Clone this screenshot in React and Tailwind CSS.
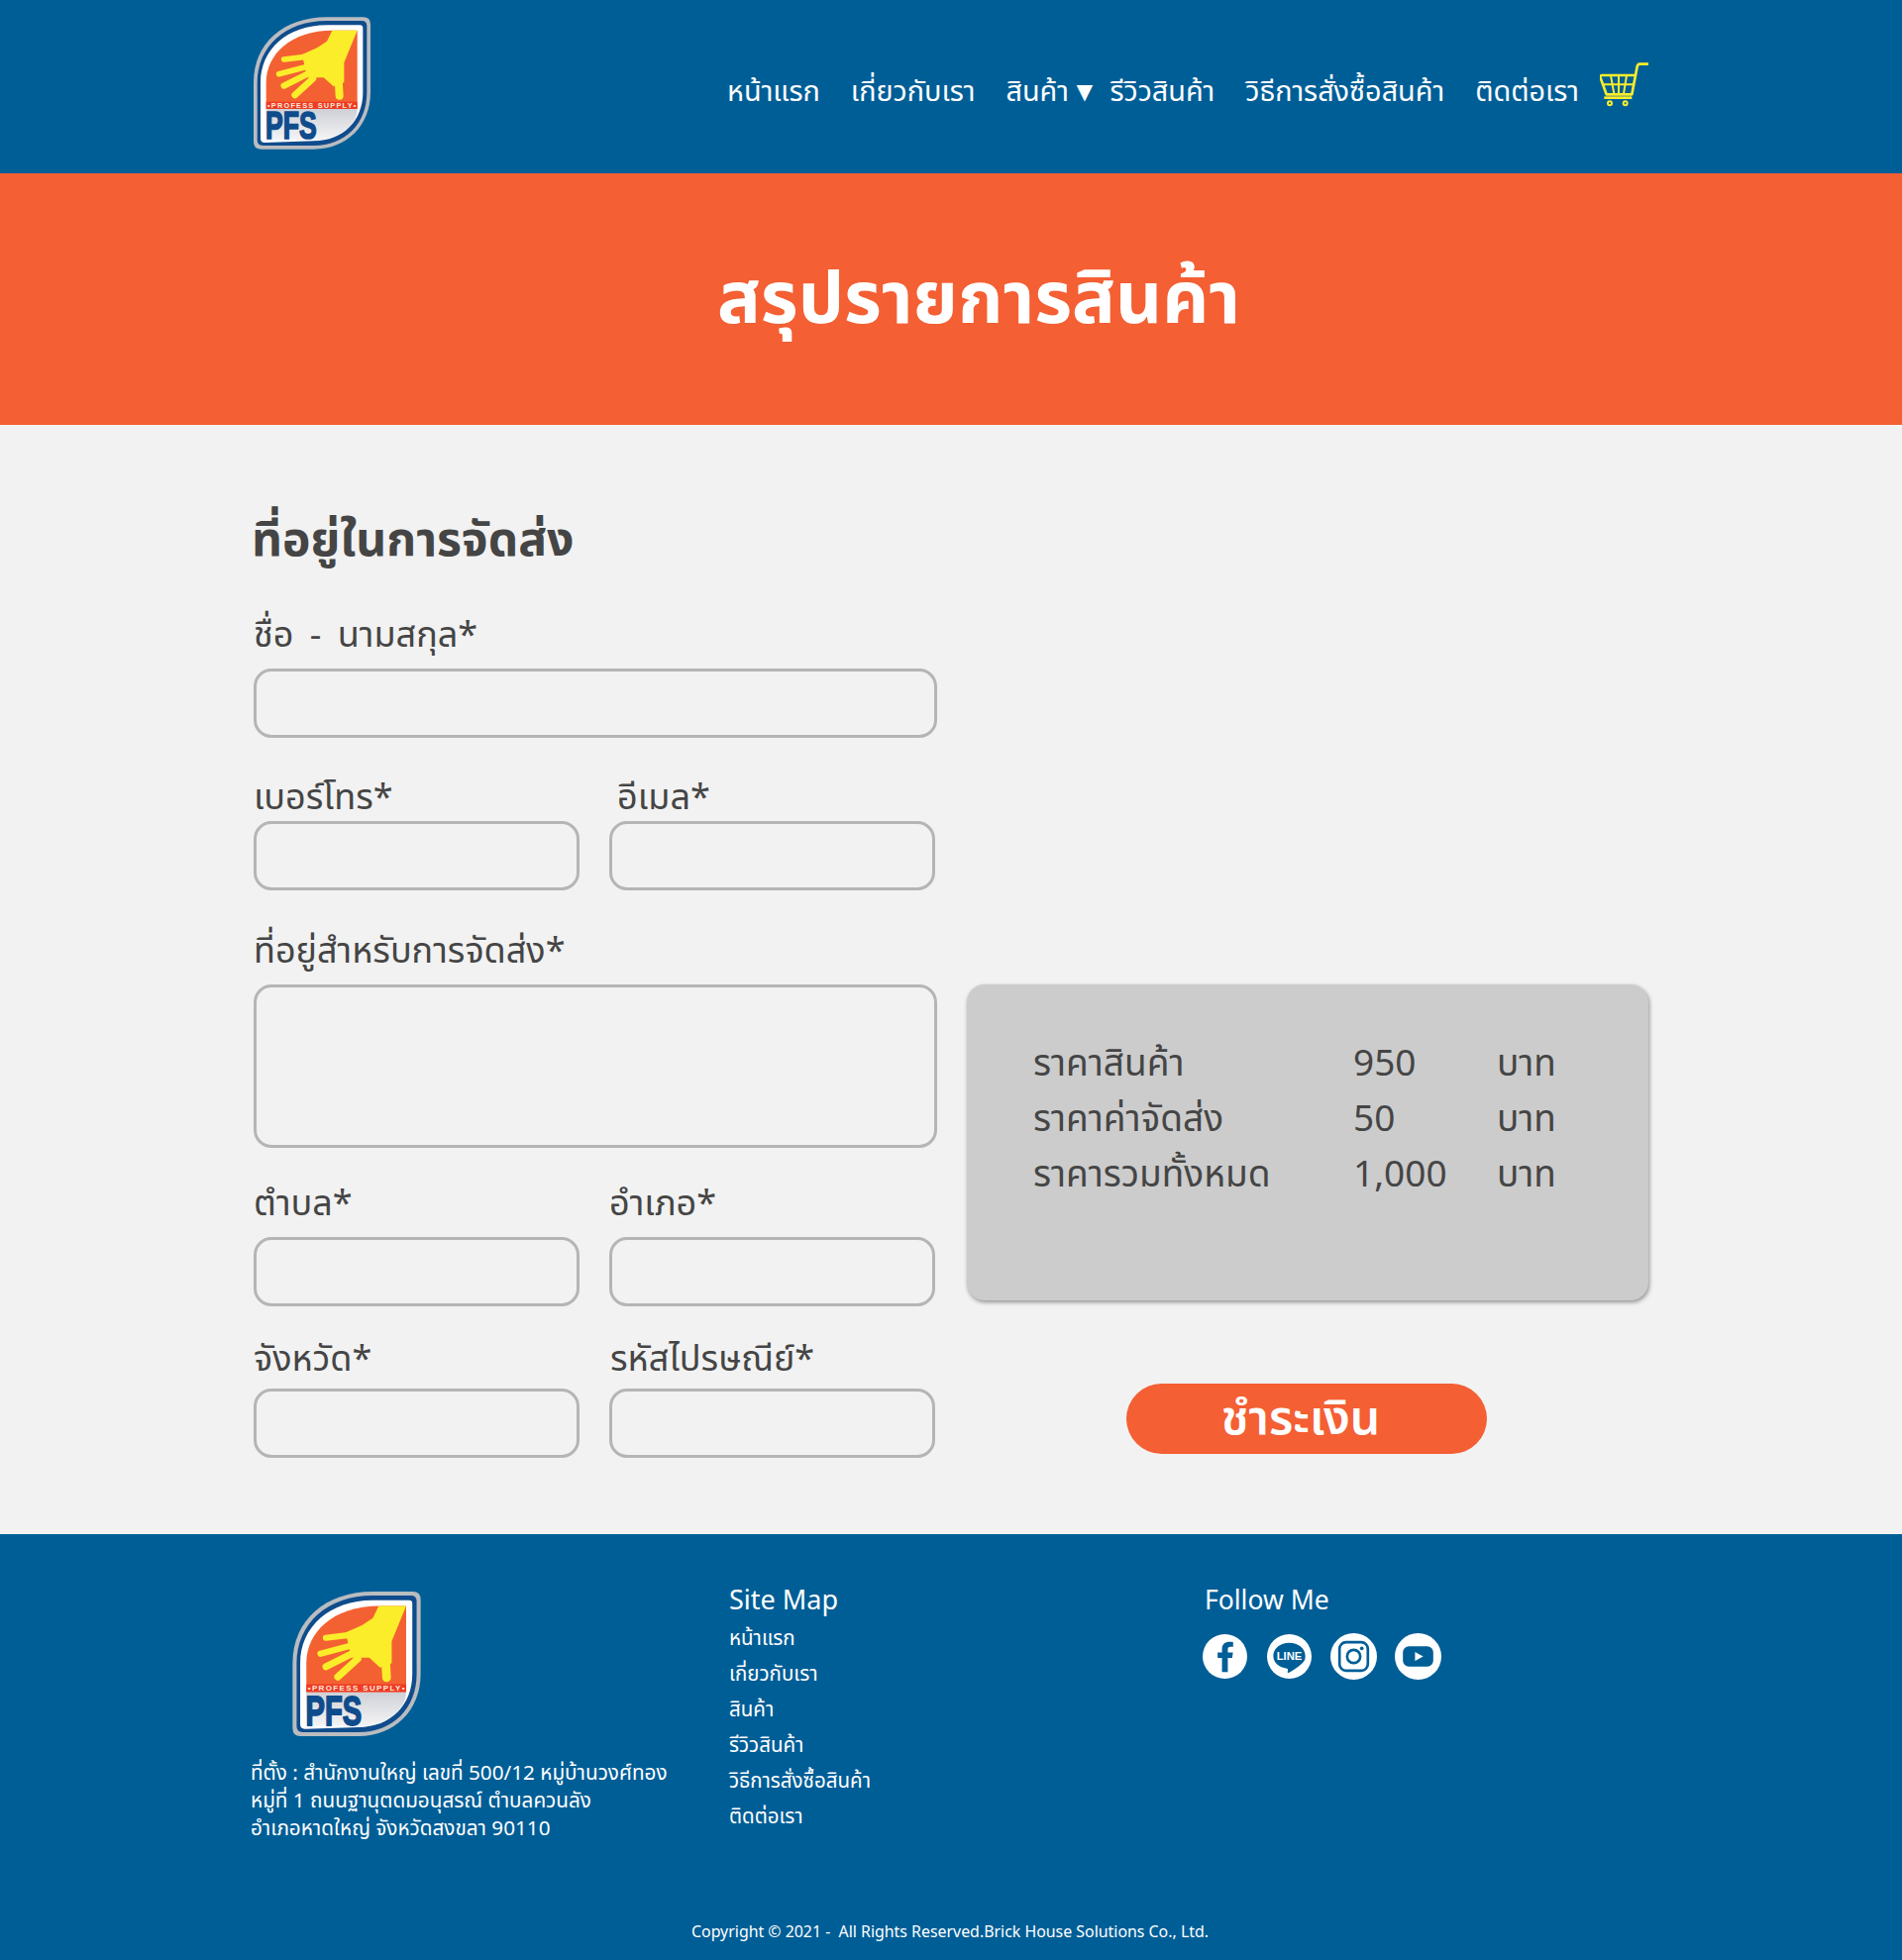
import React from "react";

const FONT = "font-['Noto_Sans_Thai','Noto_Sans','Liberation_Sans',sans-serif]";

const Logo = ({ className }) => (
  <svg viewBox="78 52 354 400" className={className}>
    <defs>
      <linearGradient id="lowerGrey" x1="0" y1="0" x2="0" y2="1">
        <stop offset="0" stopColor="#cfd0d6" />
        <stop offset="1" stopColor="#f4f4f6" />
      </linearGradient>
    </defs>
    <path d="M100 452 Q78 452 78 430 V250 C78 130 170 52 300 52 H410 Q432 52 432 74 V280 C432 380 360 452 260 452 Z" fill="#b9bcc0" />
    <path d="M106 441 Q89 441 89 424 V250 C89 140 175 63 300 63 H405 Q421 63 421 79 V280 C421 375 355 441 260 441 Z" fill="#0f4c8c" />
    <path d="M112 432 Q99 432 99 420 V250 C99 150 180 76 300 76 H400 Q409 76 409 85 V280 C409 365 350 427 260 427 Z" fill="#ffffff" />
    <path d="M116 330 V250 C116 165 190 92 318 92 H392 V330 Z" fill="#f36133" />
    <path d="M116 330 H392 C392 375 340 424 262 424 H116 Z" fill="url(#lowerGrey)" />
    <path d="M116 308 H392 V330 H116 Z" fill="#ee3b24" />
    <path d="M316 92 H392 L352 190 V250 L320 262 L290 235 H240 L225 165 L270 145 L300 125 Z" fill="#fbed2a" />
    <g stroke="#fbed2a" strokeLinecap="round" fill="none">
      <path d="M235 172 L170 180" strokeWidth="17" />
      <path d="M235 203 L155 224" strokeWidth="17" />
      <path d="M245 222 L170 260" strokeWidth="19" />
      <path d="M258 238 L203 288" strokeWidth="20" />
      <path d="M335 240 L338 290" strokeWidth="24" />
    </g>
    <text x="120" y="326" textLength="268" lengthAdjust="spacing" fontSize="22" fontWeight="700" fill="#fde9d8" fontFamily="Liberation Sans">•PROFESS SUPPLY•</text>
    <text x="114" y="421" textLength="155" lengthAdjust="spacingAndGlyphs" fontSize="118" fontWeight="700" fill="#0f4c8c" stroke="#0f4c8c" strokeWidth="5" fontFamily="Liberation Sans">PFS</text>
  </svg>
);

const Cart = () => (
  <svg viewBox="45 25 153 135" className="w-[51px] h-[45px]" fill="none" stroke="#fbed2a" strokeLinejoin="round">
    <path d="M192 30 H165 Q160 30 158 38 L142 122 H65 L47 72 Q45 64 52 64 H152" strokeWidth="8" />
    <path d="M52 92 H147 M78 65 L88 120 M102 65 L102 120 M126 65 L117 120" strokeWidth="6" />
    <path d="M58 132 H142" strokeWidth="8" />
    <circle cx="75" cy="149" r="6" strokeWidth="6" />
    <circle cx="122" cy="149" r="6" strokeWidth="6" />
  </svg>
);

const Field = ({ label, labelClass = "", h = "h-[70px]" }) => (
  <div className="flex flex-col">
    <label className={`text-[36px] leading-[44px] text-[#454545] ${labelClass}`}>{label}</label>
    <div className={`${h} rounded-[18px] border-[3px] border-[#b5b5b5] bg-[#f2f2f2]`} />
  </div>
);

const navItems = ["หน้าแรก", "เกี่ยวกับเรา", "สินค้า", "รีวิวสินค้า", "วิธีการสั่งซื้อสินค้า", "ติดต่อเรา"];
const prices = [
  ["ราคาสินค้า", "950"],
  ["ราคาค่าจัดส่ง", "50"],
  ["ราคารวมทั้งหมด", "1,000"],
];

export default function App() {
  return (
    <div className={`w-[1920px] h-[1979px] bg-[#f2f2f2] ${FONT}`}>
      {/* Header */}
      <header className="h-[175px] bg-[#005e97] pl-[256px] pr-[254px] flex justify-between">
        <Logo className="w-[118px] h-[134px] mt-[17px]" />
        <nav className="flex items-start pt-[63px] text-white text-[28.8px] leading-[60px]">
          {navItems.map((item, i) => (
            <span key={item} className={i === 2 ? "flex items-center w-[105px]" : "mr-[31px]"}>
              {item}
              {i === 2 && <span className="ml-[2px] mt-[2px] text-[28px] leading-none">▼</span>}
            </span>
          ))}
          <span className="-ml-[10px]"><Cart /></span>
        </nav>
      </header>

      {/* Title */}
      <section className="h-[254px] bg-[#f45f33] flex items-center justify-center pl-[56px] pt-[5px]">
        <h1 className="text-white text-[73px] font-bold leading-none">สรุปรายการสินค้า</h1>
      </section>

      {/* Form */}
      <main className="h-[1120px] pl-[256px] pr-[256px] pt-[87px] grid grid-cols-[690px_688px] gap-x-[30px]">
        <div className="flex flex-col">
          <h2 className="text-[48px] font-bold leading-[62px] text-[#454545] -ml-[2px] mb-[42px]">ที่อยู่ในการจัดส่ง</h2>
          <Field label="ชื่อ - นามสกุล*" labelClass="mb-[11px] [word-spacing:7px]" />
          <div className="grid grid-cols-[329px_329px] gap-x-[30px] mt-[39px]">
            <Field label="เบอร์โทร*" labelClass="mb-[1px]" />
            <Field label="อีเมล*" labelClass="mb-[1px] ml-[8px]" />
          </div>
          <div className="mt-[40px]">
            <Field label="ที่อยู่สำหรับการจัดส่ง*" h="h-[165px]" labelClass="mb-[11px]" />
          </div>
          <div className="grid grid-cols-[329px_329px] gap-x-[30px] mt-[35px]">
            <Field label="ตำบล*" labelClass="mb-[11px]" />
            <Field label="อำเภอ*" labelClass="mb-[11px]" />
          </div>
          <div className="grid grid-cols-[329px_329px] gap-x-[30px] mt-[32px]">
            <Field label="จังหวัด*" labelClass="mb-[7px]" />
            <Field label="รหัสไปรษณีย์*" labelClass="mb-[7px] ml-[1px]" />
          </div>
        </div>

        <div className="flex flex-col pt-[478px]">
          <div className="h-[319px] rounded-[18px] bg-[#cccccc] shadow-[1px_2px_4px_rgba(0,0,0,0.4)] pl-[67px] pt-[53px] text-[#454545] text-[37px] leading-[56px]">
            {prices.map(([name, value]) => (
              <div key={name} className="grid grid-cols-[323px_145px_auto]">
                <span>{name}</span>
                <span>{value}</span>
                <span>บาท</span>
              </div>
            ))}
          </div>
          <button className="w-[364px] h-[71px] mt-[84px] ml-[161px] pr-[12px] pt-[2px] rounded-full bg-[#f45f33] text-white text-[48px] font-semibold leading-none">ชำระเงิน</button>
        </div>
      </main>

      {/* Footer */}
      <footer className="relative h-[430px] bg-[#005e97] text-white">
        <div className="pl-[253px] pt-[51px] grid grid-cols-[483px_479px_auto]">
          <div>
            <Logo className="w-[130px] h-[146px] ml-[42px] mt-[7px]" />
            <p className="mt-[24px] text-[20.7px] leading-[28px]">
              ที่ตั้ง : สำนักงานใหญ่ เลขที่ 500/12 หมู่บ้านวงศ์ทอง<br />
              หมู่ที่ 1 ถนนฐานุตดมอนุสรณ์ ตำบลควนลัง<br />
              อำเภอหาดใหญ่ จังหวัดสงขลา 90110
            </p>
          </div>
          <div>
            <h3 className="text-[27px] leading-[34px] mb-[3px]">Site Map</h3>
            <ul className="text-[20.5px] leading-[36px]">
              {navItems.map((item) => (
                <li key={item}>{item}</li>
              ))}
            </ul>
          </div>
          <div>
            <h3 className="text-[26.5px] leading-[34px] ml-[1px]">Follow Me</h3>
            <div className="flex items-center mt-[15px] -ml-[1px]">
              <svg viewBox="0 0 46 46" className="w-[45px] h-[45px] mr-[20px]">
                <circle cx="23" cy="23" r="23" fill="#fff" />
                <path d="M26 39 V24.5 H30.5 L31.3 19 H26 V15.8 C26 14 26.7 13 28.7 13 H31.5 V8.3 C30.5 8.1 29 8 27.5 8 C23.3 8 20 10.5 20 15 V19 H15.5 V24.5 H20 V39 Z" fill="#005e97" />
              </svg>
              <svg viewBox="0 0 46 46" className="w-[45px] h-[45px] mr-[19px]">
                <circle cx="23" cy="23" r="23" fill="#fff" />
                <path d="M23 9 C13.6 9 6.5 15 6.5 22.5 C6.5 29.5 12.5 34.4 20.5 35.4 C21.5 35.6 21.7 36.2 21.5 37 L21.2 39 C21.1 39.8 21.8 40.2 22.6 39.7 C25 38.4 37 31 39 26.5 C39.4 25.4 39.5 24 39.5 22.5 C39.5 15 32.4 9 23 9 Z" fill="#005e97" />
                <text x="23" y="27" textAnchor="middle" fontSize="11.5" fontWeight="700" fill="#fff" fontFamily="Liberation Sans">LINE</text>
              </svg>
              <svg viewBox="0 0 46 46" className="w-[47px] h-[47px] mr-[18px]">
                <circle cx="23" cy="23" r="23" fill="#fff" />
                <rect x="9" y="9" width="28" height="28" rx="6.5" fill="none" stroke="#005e97" strokeWidth="2.6" />
                <circle cx="23" cy="23" r="6.5" fill="none" stroke="#005e97" strokeWidth="2.6" />
                <circle cx="31" cy="15" r="1.8" fill="#005e97" />
              </svg>
              <svg viewBox="0 0 46 46" className="w-[47px] h-[47px]">
                <circle cx="23" cy="23" r="23" fill="#fff" />
                <rect x="8" y="13" width="30" height="20" rx="6" fill="#005e97" />
                <path d="M20 18.5 L28 23 L20 27.5 Z" fill="#fff" />
              </svg>
            </div>
          </div>
        </div>
        <p className="absolute left-0 right-0 top-[392px] pl-[698px] text-[15.9px] leading-[20px]">Copyright © 2021 -&nbsp; All Rights Reserved.Brick House Solutions Co., Ltd.</p>
      </footer>
    </div>
  );
}
